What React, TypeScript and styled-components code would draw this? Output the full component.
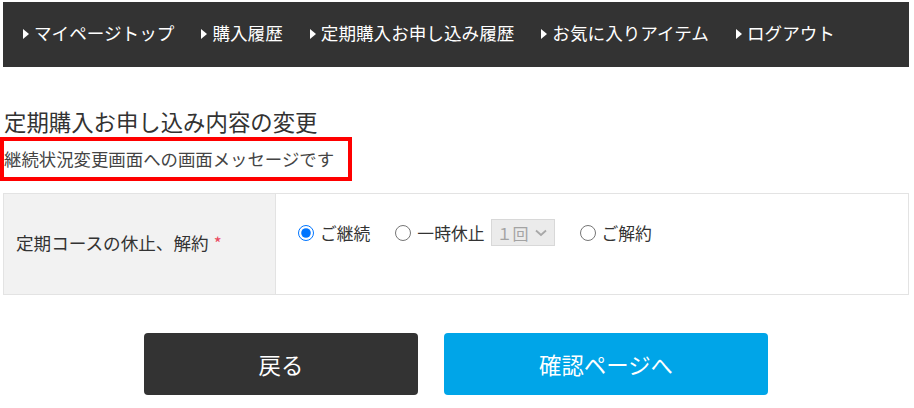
import React from "react";
import styled, { createGlobalStyle } from "styled-components";

const GlobalStyle = createGlobalStyle`
  html, body { margin: 0; padding: 0; background: #fff; }
  body {
    font-family: "Noto Sans CJK JP", "Noto Sans", sans-serif;
    color: #333;
  }
  * { box-sizing: border-box; }
`;

const Page = styled.div`
  padding: 2px 5px 0 3px;
`;

const Nav = styled.nav`
  display: flex;
  align-items: center;
  gap: 27px;
  height: 65px;
  padding: 0 0 3px 20px;
  background: #333333;
`;

const NavItem = styled.a`
  display: inline-flex;
  align-items: center;
  gap: 5px;
  color: #fff;
  font-size: 17.6px;
  line-height: 1;
  text-decoration: none;
  white-space: nowrap;
`;

const TriangleIcon = styled.svg`
  flex: none;
  margin-top: 1px;
`;

const Title = styled.h2`
  margin: 39px 0 0 1px;
  font-size: 22.4px;
  font-weight: normal;
  line-height: 31px;
  color: #333;
`;

const Message = styled.p`
  margin: 0 0 12px -3px;
  width: 352px;
  border: 4px solid #ff0000;
  font-size: 17.4px;
  line-height: 36px;
  color: #444;
  white-space: nowrap;
`;

const FormTable = styled.div`
  display: grid;
  grid-template-columns: 272px 1fr;
  border: 1px solid #e3e3e3;
`;

const HeadCell = styled.div`
  display: flex;
  align-items: center;
  height: 100px;
  padding: 0 12px 4px;
  background: #f2f2f2;
  border-right: 1px solid #e3e3e3;
  font-size: 17.6px;
  color: #333;
`;

const Required = styled.span`
  color: #ea4a5f;
  margin-left: 5px;
  font-size: 17px;
`;

const BodyCell = styled.div`
  display: flex;
  align-items: flex-start;
  gap: 25px;
  padding: 25px 0 0 22px;
`;

const RadioLabel = styled.label`
  display: inline-flex;
  align-items: center;
  gap: 6px;
  height: 27px;
  font-size: 16.8px;
  color: #333;
  white-space: nowrap;
`;

const Radio = styled.input`
  width: 16px;
  height: 16px;
  margin: 0;
  accent-color: #0075ff;
`;

const FakeSelect = styled.span`
  display: inline-flex;
  align-items: center;
  gap: 6px;
  width: 64px;
  height: 27px;
  padding: 0 5px;
  background: #ebebeb;
  border: 1px solid #d8d8d8;
  color: #a3a3a3;
  font-size: 16px;
`;

const Actions = styled.div`
  display: flex;
  justify-content: center;
  gap: 26px;
  margin-top: 38px;
`;

const Button = styled.button<{ $primary?: boolean; $w: number }>`
  width: ${(p) => p.$w}px;
  height: 62px;
  border: 0;
  border-radius: 4px;
  background: ${(p) => (p.$primary ? "#00a5e8" : "#333333")};
  color: #fff;
  font-family: inherit;
  font-size: 22.4px;
  cursor: pointer;
`;

const Triangle = () => (
  <TriangleIcon width="6" height="10" viewBox="0 0 6 10">
    <path d="M0 0 L6 5 L0 10 Z" fill="#fff" />
  </TriangleIcon>
);

const navItems = [
  "マイページトップ",
  "購入履歴",
  "定期購入お申し込み履歴",
  "お気に入りアイテム",
  "ログアウト",
];

export default function App() {
  return (
    <Page>
      <GlobalStyle />
      <Nav>
        {navItems.map((t) => (
          <NavItem key={t} href="#">
            <Triangle />
            {t}
          </NavItem>
        ))}
      </Nav>
      <Title>定期購入お申し込み内容の変更</Title>
      <Message>継続状況変更画面への画面メッセージです</Message>
      <FormTable>
        <HeadCell>
          定期コースの休止、解約<Required>*</Required>
        </HeadCell>
        <BodyCell>
          <RadioLabel>
            <Radio type="radio" name="status" defaultChecked />
            ご継続
          </RadioLabel>
          <RadioLabel>
            <Radio type="radio" name="status" />
            一時休止
            <FakeSelect>
              １回
              <svg width="12" height="8" viewBox="0 0 12 8">
                <path d="M1 1.5 L6 6 L11 1.5" fill="none" stroke="#a8a8a8" strokeWidth="1.8" />
              </svg>
            </FakeSelect>
          </RadioLabel>
          <RadioLabel>
            <Radio type="radio" name="status" />
            ご解約
          </RadioLabel>
        </BodyCell>
      </FormTable>
      <Actions>
        <Button $w={274}>戻る</Button>
        <Button $w={324} $primary>
          確認ページへ
        </Button>
      </Actions>
    </Page>
  );
}
